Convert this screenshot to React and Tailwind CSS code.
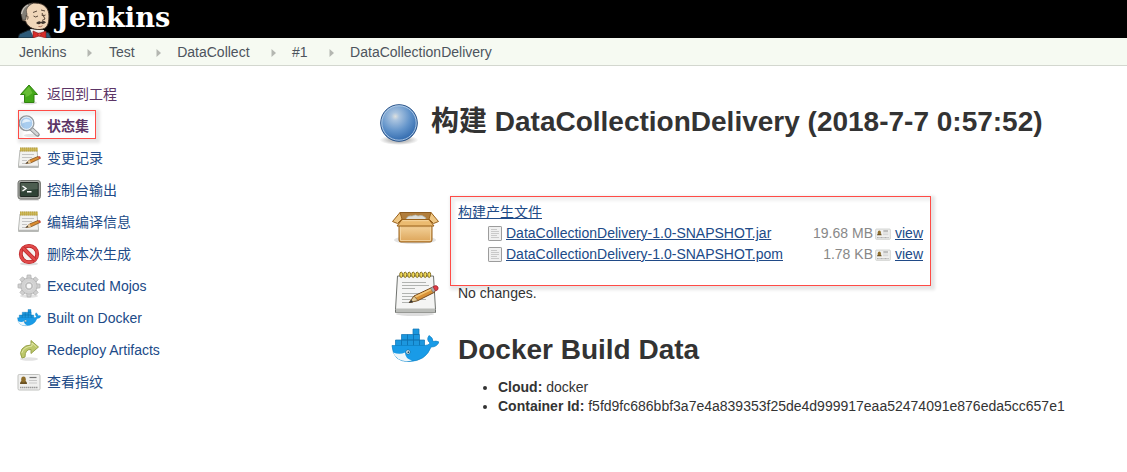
import React from "react";

function Butler() {
  return (
    <svg width="34" height="38" viewBox="0 0 34 38" className="shrink-0">
      <path d="M0 38 L1.500 34 L11 30 L25 31 L31 33 L33 38Z" fill="#2d5a78" stroke="#17262f" />
      <path d="M12 29 L16 38 L28 38 L26 30Z" fill="#f0f0f0" />
      <path d="M5 18 C1 9 8 3 17 3 C27 3 31 9 31 16 C31 25 29 29 22 29.500 C14 30 9 26 7.500 21 C4.500 21 3.500 20 5 18Z" fill="#f0d6b9" stroke="#3d3027" strokeWidth="1" />
      <path d="M4 18 C1 10 6 4 15 3 C10 6 7 9 9 14 L7.500 20 C5 20.500 4 19.500 4 18Z" fill="#817d75" stroke="#3a342f" strokeWidth=".6" />
      <path d="M3.500 14 Q5 7 10 5" fill="none" stroke="#c8c5bd" strokeWidth="1.200" />
      <path d="M7.500 16c2.500-1 3 1 2 3.500M15 12.500l4-1.500M23 10l4 1M15.500 16q2 2 4.500 0M23.500 15q2 1.500 4 0M24 13l3 6-3 1.500" fill="none" stroke="#4a392d" strokeWidth=".9" />
      <path d="M18 23q3-3 5-1 3-2 5 .5-3 2.500-5 .5-2 2.500-5 0Z" fill="#40352e" />
      <path d="M20.500 26.500q2.500.8 4-.8" stroke="#9b5644" fill="none" strokeWidth=".8" />
      <path d="M15 31l6 2.500 7-2.500v7l-7-2-6 2Z" fill="#d82d2b" stroke="#7c1717" strokeWidth=".6" />
      <circle cx="21.500" cy="34.500" r="1.600" fill="#ef4742" stroke="#7c1717" strokeWidth=".5" />
    </svg>
  );
}

function UpIcon() {
  return (
    <svg width="24" height="24" viewBox="0 0 24 24">
      <ellipse cx="12" cy="20.800" rx="8" ry="1.800" fill="#ddd" />
      <path d="M12 3 L20.500 12.500H17V20.500H7.500V12.500H3.500Z" fill="#43a818" stroke="#318210" strokeLinejoin="round" />
      <path d="M12 4.500 L5.500 11.700H8.500V15q4-1 7-4Z" fill="#7ac943" opacity=".65" />
    </svg>
  );
}

function SearchIcon() {
  return (
    <svg width="24" height="24" viewBox="0 0 24 24">
      <ellipse cx="15" cy="21.500" rx="8" ry="1.800" fill="#e4e4e4" />
      <path d="M14 14.500 L20.500 20.500" stroke="#85888a" strokeWidth="4.400" strokeLinecap="round" />
      <path d="M14 14.500 L20.300 20.200" stroke="#d3d5d6" strokeWidth="2.600" strokeLinecap="round" />
      <circle cx="9.500" cy="9.200" r="7.300" fill="#a9cdef" stroke="#979da1" strokeWidth="1.500" />
      <circle cx="9.500" cy="9.200" r="6.200" fill="none" stroke="#edf3f8" strokeWidth="1" />
      <path d="M5 9.500q0-4.500 4.500-4.500 3 0 4.500 2.500-5 0-9 2Z" fill="#e4f1fc" />
    </svg>
  );
}

function NotepadIcon({ size = 24 }) {
  if (size > 24) {
    const rings = [9, 13, 17, 21, 25, 29, 33, 37];
    return (
      <svg width="48" height="48" viewBox="0 0 48 48">
        <ellipse cx="24" cy="44" rx="19" ry="2" fill="#ddd" />
        <path d="M6.500 6h36l2 33.500v3h-40v-3Z" fill="#f5f5f4" stroke="#70736f" strokeLinejoin="round" />
        <path d="M5 38.500h39v4H5Z" fill="#bbbdb9" />
        <path d="M11 12.500h24M11 15.500h27M11 18.500h13M11 23.500h24M11 26.500h21M11 29.500h24M11 32.500h11" stroke="#a9aba8" strokeWidth=".9" />
        {rings.map((x) => (
          <ellipse key={x} cx={x + 1.2} cy="4.800" rx="1.500" ry="2.700" fill="#f3dc58" stroke="#7d681b" strokeWidth=".9" />
        ))}
        <path d="M18.500 32.500 L23 26 L41 17.500 L44 22 L27 30.500Z" fill="#d99237" stroke="#71451b" strokeLinejoin="round" />
        <path d="M23.500 27.200 L41 19" stroke="#f4c675" strokeWidth="1.500" />
        <path d="M18.500 32.500 L23 26 L27 30.500Z" fill="#e3cd9c" stroke="#725126" strokeWidth=".7" />
        <path d="M17.500 33l3-3 1.500 2Z" fill="#333" />
        <path d="M39.500 18l3-1.500 2.500 3.500-3 2.500Z" fill="#aaa" stroke="#666" strokeWidth=".5" />
        <path d="M42 16.500q3.500-2 5 .5 1 3-2.500 4Z" fill="#e33a43" stroke="#8f2630" strokeWidth=".7" />
      </svg>
    );
  }
  return (
    <svg width="24" height="24" viewBox="0 0 24 24">
      <path d="M3 4h17l1.500 15v2.500H1.500V19Z" fill="#f2f2f0" stroke="#b8bab7" />
      <path d="M2 20.500h19" stroke="#b5b6b4" strokeWidth="1.500" />
      <path d="M3 3.500h17.500" stroke="#a8902f" strokeWidth="4" strokeDasharray="1.700 .300" />
      <path d="M3.500 3.500h17" stroke="#e8d060" strokeWidth="2.400" strokeDasharray=".900 1.100" />
      <path d="M5 8.500h12M5 11.500h10M5 14.500h5M5 17.500h4" stroke="#c4c4c4" />
      <path d="M9 17.500 L12.500 14 L21 10.500 L23 12.500 L14 16.800Z" fill="#dc8d32" stroke="#80501d" strokeWidth=".8" />
      <path d="M9 17.500l3.500-3.500 1.500 2.800Z" fill="#e7cda0" />
      <path d="M8.500 17.800l2-2 .8 1.200Z" fill="#333" />
      <path d="M21 10.300l2-.1 1 2-1.500.8Z" fill="#c84a3c" />
    </svg>
  );
}

function TerminalIcon() {
  return (
    <svg width="24" height="24" viewBox="0 0 24 24">
      <path d="M3 21h18l1 1.500H2Z" fill="#ccc" />
      <rect x="1" y="2.500" width="22.400" height="18.500" rx="2.500" fill="#a9aba6" stroke="#757772" />
      <rect x="3.200" y="4.500" width="18" height="14" rx=".5" fill="#2f4336" stroke="#202822" />
      <path d="M3.700 5h17v6q-8 0-17 3Z" fill="#5d6d60" opacity=".65" />
      <path d="M5.500 8l3.500 2.500-3.500 2.500M10 13.800h4.500" fill="none" stroke="#fff" strokeWidth="1.400" />
    </svg>
  );
}

function ForbidIcon() {
  return (
    <svg width="24" height="24" viewBox="0 0 24 24">
      <ellipse cx="12" cy="21.800" rx="9" ry="1.700" fill="#ddd" />
      <circle cx="12" cy="12" r="8.200" fill="#f5f3f1" stroke="#b71d20" strokeWidth="3.800" />
      <circle cx="12" cy="12" r="8.300" fill="none" stroke="#e04a4a" strokeWidth="2.500" />
      <path d="M6 6l12 12" stroke="#b71d20" strokeWidth="4" />
      <path d="M6 6l12 12" stroke="#e04a4a" strokeWidth="2.700" />
    </svg>
  );
}

function GearIcon() {
  const teeth = [0, 45, 90, 135, 180, 225, 270, 315];
  return (
    <svg width="24" height="24" viewBox="0 0 24 24">
      <ellipse cx="12" cy="22" rx="9" ry="1.800" fill="#e2e2e2" />
      <g fill="#d0d0d0" stroke="#b3b3b3" strokeWidth=".8">
        {teeth.map((a) => (
          <path key={a} d="M9.500 6l.7-5h3.600l.7 5Z" transform={`rotate(${a} 12 12)`} />
        ))}
        <circle cx="12" cy="12" r="8" />
      </g>
      <circle cx="12" cy="12" r="7.600" fill="#d2d2d2" />
      <circle cx="12" cy="12" r="4.500" fill="#c2c2c2" stroke="#dcdcdc" />
      <circle cx="12" cy="12" r="2.900" fill="#fafafa" stroke="#aaa" strokeWidth=".7" />
    </svg>
  );
}

function DockerIcon({ size = 24 }) {
  return (
    <svg width={size} height={size} viewBox="0 0 48 48">
      <g fill="#1c97de" stroke="#0f73b3" strokeWidth=".7">
        <path d="M22 7h6v5.500h-6zM10.500 12.500h6V18h-6zM16.500 12.500h6V18h-6zM22.500 12.500h6V18h-6zM4.500 18h6v6h-6zM10.500 18h6v6h-6zM16.500 18h6v6h-6zM22.500 18h6v6h-6zM28.500 18h5v6h-5z" />
      </g>
      <path d="M1 23.500H32q6 0 7-2.500-4-3-1-7.500 4 2 4 6 3-1 6 .5-2 5-8 5-5 14-22 14.500Q2 40 1 23.500Z" fill="#199be7" stroke="#0f82c6" strokeWidth=".7" />
      <path d="M2 30.500q7 2.500 12 0 0 6 7 8-14 3-19-8Z" fill="#eef6fa" />
      <circle cx="17" cy="30" r="2.100" fill="#fff" stroke="#174962" strokeWidth=".5" />
      <circle cx="17.300" cy="30.200" r=".9" fill="#174962" />
    </svg>
  );
}

function RedoIcon() {
  return (
    <svg width="24" height="24" viewBox="0 0 24 24">
      <ellipse cx="12" cy="21" rx="9" ry="1.800" fill="#e2e2e2" />
      <path d="M5 20 Q2 15 5 11 Q8 7 14 7V2.500L21.500 9 14 15.500V11.500Q8 11 8 19Z" fill="#bdc86b" stroke="#98a24c" strokeLinejoin="round" />
      <path d="M4.800 15q1.500-6 10.200-7V5l4.500 4" fill="none" stroke="#e4e9ad" strokeWidth=".9" />
    </svg>
  );
}

function CardIcon({ size = 24 }) {
  return (
    <svg width={size} height={size} viewBox="0 0 24 24">
      <rect x="1" y="4.500" width="22" height="15.500" rx="1.300" fill="#f0f0ef" stroke="#c0c1be" />
      <path d="M3 17.500h18" stroke="#999" strokeWidth="1.300" strokeDasharray="1.500 .5" />
      <path d="M3 14q0-3.500 3.500-3.500T10 14Z" fill="#6b5224" />
      <ellipse cx="6.500" cy="9.500" rx="2.300" ry="2.900" fill="#8f6e2b" />
      <path d="M12.500 7.500h7" stroke="#777" strokeWidth="1.200" />
      <path d="M12 10.500h8M12 13h8" stroke="#c8c8c8" />
    </svg>
  );
}

function FileIcon() {
  return (
    <svg width="16" height="16" viewBox="0 0 16 16">
      <rect x="1.500" y=".5" width="13" height="14" rx=".6" fill="#f0f0f0" stroke="#9c9c9c" />
      <path d="M4 3.500h6M4 5.500h8M4 7.500h8M4 9.500h6M4 11.500h8" stroke="#c4c4c4" strokeWidth=".9" />
    </svg>
  );
}

function BoxIcon() {
  return (
    <svg width="48" height="48" viewBox="0 0 48 48">
      <defs>
        <linearGradient id="cardboard" x1="0" y1="0" x2="0" y2="1">
          <stop offset="0" stopColor="#dba457" />
          <stop offset=".35" stopColor="#f0cb90" />
          <stop offset="1" stopColor="#dca458" />
        </linearGradient>
      </defs>
      <ellipse cx="24" cy="39" rx="21" ry="4" fill="#e2e2e2" />
      <path d="M8 20h33v19q0 2-2 2H10q-2 0-2-2Z" fill="url(#cardboard)" stroke="#98601a" />
      <path d="M9.500 24v15.500h30V24" fill="none" stroke="#f5d9aa" strokeWidth=".8" />
      <path d="M9 11.500h31l-1 8H10Z" fill="#b07d3c" stroke="#8e5c20" />
      <path d="M15 18q2-4 6-3 4-2 6 0 4-2 8 2l-1 2H16Z" fill="#deded8" stroke="#aeb0a6" strokeWidth=".7" />
      <path d="M9 11.500L1.500 20.500l5 2L11 18ZM40 11.500l7.500 9-5 2L38 18Z" fill="#efc784" stroke="#98601a" strokeLinejoin="round" />
      <path d="M11 18.500h27l5 6.500H6Z" fill="#ebbb70" stroke="#98601a" strokeLinejoin="round" />
      <path d="M11.500 19.700h26" stroke="#f8dcab" strokeWidth=".8" />
    </svg>
  );
}

function BlueBall() {
  return (
    <svg width="48" height="48" viewBox="0 0 48 48" className="shrink-0">
      <defs>
        <radialGradient id="ball" cx=".4" cy=".32" r=".72">
          <stop offset="0" stopColor="#dde0de" />
          <stop offset=".15" stopColor="#a9c3df" />
          <stop offset=".55" stopColor="#6495cb" />
          <stop offset="1" stopColor="#2a64aa" />
        </radialGradient>
        <radialGradient id="ballShade">
          <stop offset=".5" stopColor="#c4c4c4" />
          <stop offset="1" stopColor="#c4c4c4" stopOpacity="0" />
        </radialGradient>
      </defs>
      <ellipse cx="24" cy="40" rx="19.500" ry="5" fill="url(#ballShade)" />
      <circle cx="24" cy="23" r="18.300" fill="url(#ball)" stroke="#2b5489" />
      <circle cx="24" cy="23" r="17.200" fill="none" stroke="#b7cee6" strokeWidth=".9" />
    </svg>
  );
}

const tasks = [
  { label: "返回到工程", icon: <UpIcon />, visited: true },
  { label: "状态集", icon: <SearchIcon />, current: true },
  { label: "变更记录", icon: <NotepadIcon /> },
  { label: "控制台输出", icon: <TerminalIcon /> },
  { label: "编辑编译信息", icon: <NotepadIcon /> },
  { label: "删除本次生成", icon: <ForbidIcon /> },
  { label: "Executed Mojos", icon: <GearIcon /> },
  { label: "Built on Docker", icon: <DockerIcon /> },
  { label: "Redeploy Artifacts", icon: <RedoIcon /> },
  { label: "查看指纹", icon: <CardIcon /> },
];

const crumbs = ["Jenkins", "Test", "DataCollect", "#1", "DataCollectionDelivery"];

const files = [
  { name: "DataCollectionDelivery-1.0-SNAPSHOT.jar", size: "19.68 MB" },
  { name: "DataCollectionDelivery-1.0-SNAPSHOT.pom", size: "1.78 KB" },
];

function Highlight({ className }) {
  return (
    <div className={`pointer-events-none absolute border border-[#ff4b46] shadow-[2px_2px_3px_2px_rgba(0,0,0,0.1),inset_3px_3px_3px_1px_rgba(0,0,0,0.06)] ${className}`} />
  );
}

export default function App() {
  return (
    <div className="h-[472px] w-[1127px] overflow-hidden bg-white font-['Liberation_Sans','Noto_Sans_CJK_SC',sans-serif] text-[14px] text-[#333]">
      <header className="flex h-[38px] bg-black pl-[18px]">
        <Butler />
        <span className="ml-[4px] origin-left scale-x-[1.12] font-['DejaVu_Serif_Condensed','DejaVu_Serif',serif] text-[27px] leading-[35px] font-bold text-white">
          Jenkins
        </span>
      </header>

      <nav className="flex h-7 items-center border-b border-[#d3d7cf] bg-[#f6faf2] pt-0.5 pl-[19px] text-[#4d545d]">
        {crumbs.map((crumb, i) => (
          <React.Fragment key={crumb}>
            {i > 0 && (
              <svg width="42.5" height="8" viewBox="0 0 42.5 8">
                <path d="M21.500 0v8l4.500-4Z" fill="#b4b7b1" />
              </svg>
            )}
            <span>{crumb}</span>
          </React.Fragment>
        ))}
      </nav>

      <div className="flex">
        <aside className="w-[375px] shrink-0 pt-3 pl-[17px]">
          {tasks.map((task) => (
            <div key={task.label} className="relative flex h-8 items-center gap-1.5">
              {task.icon}
              <a className={task.current ? "font-bold text-[#5c3566]" : task.visited ? "text-[#5c3566]" : "text-[#204a87]"}>
                {task.label}
              </a>
              {task.current && <Highlight className="top-0 left-px h-[29px] w-[78px]" />}
            </div>
          ))}
        </aside>

        <main className="grow">
          <div className="flex h-[138px] gap-2 pt-[34px]">
            <BlueBall />
            <h1 className="h-[42px] text-[28px] leading-[44px] font-bold whitespace-nowrap">
              构建 DataCollectionDelivery (2018-7-7 0:57:52)
            </h1>
          </div>

          <section className="relative flex h-[66px] gap-[19px] pl-4">
            <div className="-mt-[3px] h-12 w-12 shrink-0">
              <BoxIcon />
            </div>
            <div className="w-[465px]">
              <a className="block h-[19px] leading-[17px] text-[#204a87] underline">构建产生文件</a>
              {files.map((file) => (
                <div key={file.name} className="flex h-[21px] items-center pl-[29px] whitespace-nowrap">
                  <FileIcon />
                  <a className="ml-[3px] text-[#204a87] underline">{file.name}</a>
                  <span className="ml-auto text-[#888]">{file.size}</span>
                  <span className="mr-1 ml-0.5">
                    <CardIcon size={16} />
                  </span>
                  <a className="text-[#204a87] underline">view</a>
                </div>
              ))}
            </div>
            <Highlight className="-top-2 left-[75px] h-[90px] w-[481px]" />
          </section>

          <section className="flex h-[52px] gap-[19px] pl-4">
            <NotepadIcon size={48} />
            <p className="pt-[13px]">No changes.</p>
          </section>

          <section className="flex gap-[19px] pl-4">
            <DockerIcon size={48} />
            <div>
              <h1 className="pt-[7px] text-[28px] leading-[42px] font-bold">Docker Build Data</h1>
              <ul className="mt-[7px] list-disc pl-10 leading-[19px]">
                <li>
                  <b>Cloud:</b> docker
                </li>
                <li>
                  <b>Container Id:</b> f5fd9fc686bbf3a7e4a839353f25de4d999917eaa52474091e876eda5cc657e1
                </li>
              </ul>
            </div>
          </section>
        </main>
      </div>
    </div>
  );
}
